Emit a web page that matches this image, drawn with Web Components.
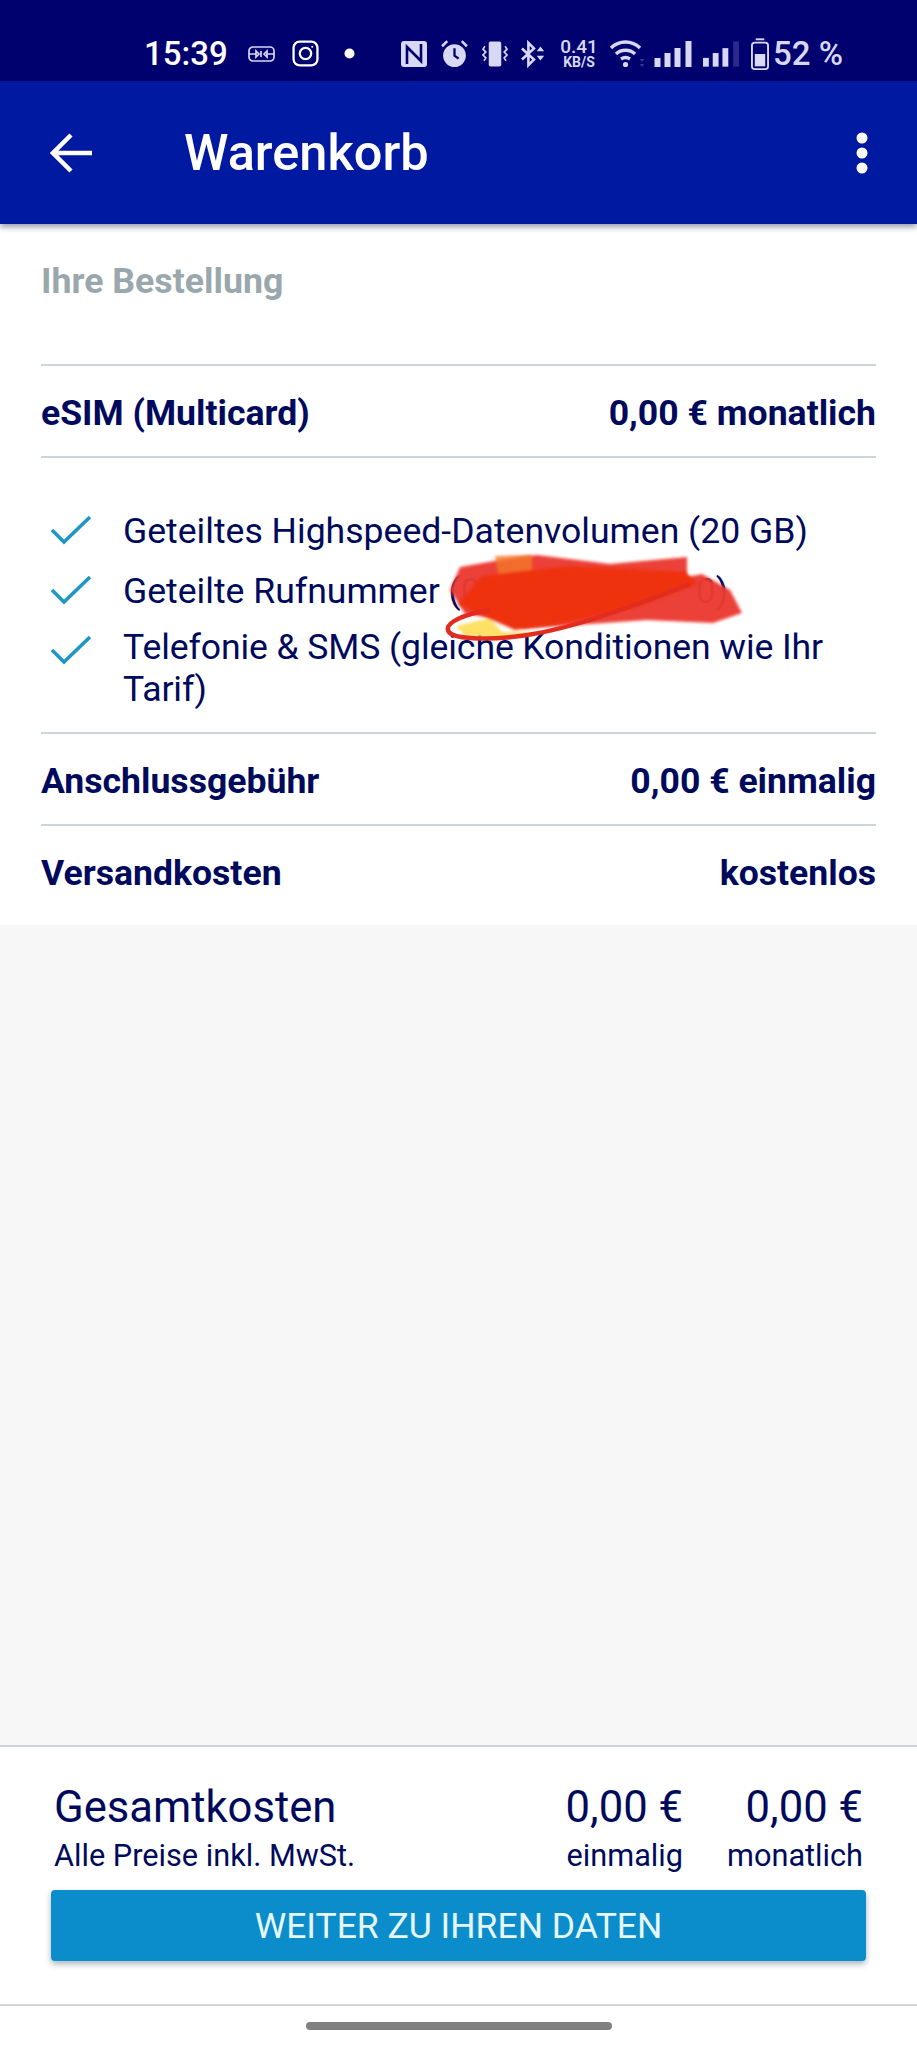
<!DOCTYPE html>
<html lang="de">
<head>
<meta charset="utf-8">
<title>Warenkorb</title>
<style>
  html, body { margin: 0; padding: 0; }
  body { width: 917px; height: 2048px; background: #fff; font-family: Roboto, "Liberation Sans", sans-serif; color: #000a5c; overflow: hidden; }
  .page { display: flex; flex-direction: column; height: 2048px; background: #f7f7f8; }
</style>
</head>
<body>
<div class="page">
  <status-bar></status-bar>
  <app-bar title="Warenkorb"></app-bar>
  <order-list></order-list>
  <total-panel></total-panel>
  <nav-handle></nav-handle>
</div>

<script>
class StatusBar extends HTMLElement {
  constructor() {
    super();
    this.attachShadow({ mode: 'open' });
    this.shadowRoot.innerHTML = `
      <style>
        :host { display: flex; align-items: center; height: 81px; background: #00006f; color: #fff; box-sizing: border-box; padding: 26px 0 0 144px; flex: none; }
        svg { display: block; flex: none; }
        .time { font-size: 33px; font-weight: 500; width: 84px; white-space: nowrap; }
        .speed { width: 40px; margin-left: 13px; text-align: center; color: #d8d8f4; line-height: 1; }
        .speed b { display: block; font-size: 19px; font-weight: 500; line-height: 18px; }
        .speed i { display: block; font-style: normal; font-weight: 700; font-size: 14px; line-height: 13px; }
        .pct { font-size: 33px; color: #d8d8f4; font-weight: 500; margin-left: 4px; white-space: nowrap; }
      </style>
      <span class="time">15:39</span>
      <svg style="margin-left:20px" width="27" height="16" viewBox="0 0 27 16" fill="none" stroke="#d8d8f4" stroke-width="1.7"><rect x="1" y="1" width="25" height="14" rx="4"/><path d="M1 8h7M19 8h7M8 5l3 3-3 3zM19 5l-3 3 3 3zM13 5v6"/></svg>
      <svg style="margin-left:17px" width="27" height="27" viewBox="0 0 26 26" fill="none" stroke="#fff" stroke-width="2.2"><rect x="1.500" y="1.500" width="23" height="23" rx="6"/><circle cx="13" cy="13" r="5.500"/><circle cx="19.500" cy="6.500" r="1" fill="#fff" stroke="none"/></svg>
      <svg style="margin-left:25px" width="11" height="11" viewBox="0 0 11 11"><circle cx="5.500" cy="5.500" r="5" fill="#fff"/></svg>
      <svg style="margin-left:46px" width="26" height="26" viewBox="0 0 26 26"><path fill="#d8d8f4" d="M3 0h20a3 3 0 0 1 3 3v20a3 3 0 0 1-3 3H3a3 3 0 0 1-3-3V3a3 3 0 0 1 3-3z"/><path fill="none" stroke="#00006f" stroke-width="2.600" d="M6 23V6l11 11M20 3v17L9 9"/></svg>
      <svg style="margin-left:13px" width="29" height="29" viewBox="0 0 28 28"><circle cx="14" cy="16" r="11" fill="#d8d8f4"/><path d="M14 9v7l4 3" fill="none" stroke="#00006f" stroke-width="2.200"/><path d="M2 7l5-5M26 7l-5-5" stroke="#d8d8f4" stroke-width="2.400" fill="none"/></svg>
      <svg style="margin-left:13px" width="26" height="26" viewBox="0 0 27 26"><rect x="7" y="0" width="13" height="26" rx="2" fill="#d8d8f4"/><path d="M3 5l-2 3 3 3-3 3 3 3-2 3M24 5l2 3-3 3 3 3-3 3 2 3" fill="none" stroke="#d8d8f4" stroke-width="1.700"/></svg>
      <svg style="margin-left:13px" width="25" height="28" viewBox="0 0 27 28" fill="none" stroke="#d8d8f4" stroke-width="2.800"><path d="M1 8l13 12-6 6V2l6 6L1 20"/><path fill="#d8d8f4" stroke="none" d="M17 11l4-5 4 5zM17 16l4 5 4-5z"/></svg>
      <span class="speed"><b>0.41</b><i>KB/S</i></span>
      <svg style="margin-left:10px" width="36" height="29" viewBox="0 0 36 29" fill="none" stroke="#d8d8f4" stroke-width="3.400"><path d="M2 9c8-8 21-8 29 0M7 15c5-5 14-5 19 0M12 20c3-2 6-2 9 0"/><circle cx="16.500" cy="25.500" r="2.600" fill="#d8d8f4" stroke="none"/><path d="M31 20l2 3 2-3zM31 25l2 3 2-3z" fill="#3a3a9e" stroke="none"/></svg>
      <svg style="margin-left:9px" width="38" height="26" viewBox="0 0 37 26" fill="#d8d8f4"><rect x="0" y="17" width="6" height="9"/><rect x="10" y="12" width="6" height="14"/><rect x="20" y="7" width="6" height="19"/><rect x="31" y="0" width="6" height="26"/></svg>
      <svg style="margin-left:11px" width="36" height="26" viewBox="0 0 37 26" fill="#d8d8f4"><rect x="0" y="17" width="6" height="9"/><rect x="10" y="12" width="6" height="14"/><rect x="20" y="7" width="6" height="19"/><rect x="31" y="0" width="6" height="26" fill="#2a2a8a"/></svg>
      <svg style="margin-left:12px" width="18" height="34" viewBox="0 0 19 34" fill="none" stroke="#d8d8f4" stroke-width="2"><rect x="1" y="5" width="17" height="28" rx="3"/><path d="M5 1.500h9"/><rect x="4" y="17" width="11" height="13" fill="#d8d8f4" stroke="none"/></svg>
      <span class="pct">52 %</span>
    `;
  }
}

class AppBar extends HTMLElement {
  constructor() {
    super();
    this.attachShadow({ mode: 'open' });
    this.shadowRoot.innerHTML = `
      <style>
        :host { display: flex; align-items: center; height: 143px; background: #0019a1; color: #fff; flex: none; position: relative; box-shadow: 0 3px 6px rgba(0,0,40,.4); z-index: 2; box-sizing: border-box; padding: 0 0 0 50px; }
        h1 { margin: 0 0 0 91px; font-size: 50.500px; font-weight: 500; flex: 1; }
        svg { display: block; }
        .more { margin-right: 48px; }
      </style>
      <svg width="43" height="40" viewBox="0 0 43 40" fill="none" stroke="#fff" stroke-width="4.500"><path d="M42 20H3M21 2L3 20l18 18"/></svg>
      <h1></h1>
      <svg class="more" width="14" height="42" viewBox="0 0 14 42" fill="#fff"><circle cx="7" cy="6" r="5.500"/><circle cx="7" cy="21" r="5.500"/><circle cx="7" cy="36" r="5.500"/></svg>
    `;
    this.shadowRoot.querySelector('h1').textContent = this.getAttribute('title');
  }
}

class PriceRow extends HTMLElement {
  constructor() {
    super();
    this.attachShadow({ mode: 'open' });
    this.shadowRoot.innerHTML = `
      <style>
        :host { display: flex; justify-content: space-between; align-items: center; height: 90px; box-sizing: content-box; font-size: 35.600px; font-weight: 700; color: #000a5c; }
        div { display: flex; justify-content: space-between; width: 100%; padding-top: 3px; }
      </style>
      <div><slot name="label"></slot><slot name="value"></slot></div>
    `;
  }
}

class CheckItem extends HTMLElement {
  constructor() {
    super();
    this.attachShadow({ mode: 'open' });
    this.shadowRoot.innerHTML = `
      <style>
        :host { display: flex; align-items: flex-start; font-size: 35.600px; line-height: 42px; color: #000a5c; }
        svg { flex: none; display: block; margin: var(--icon-top, 5px) 31px 0 9px; }
      </style>
      <svg width="42" height="30" viewBox="0 0 42 30" fill="none" stroke="#1f96c4" stroke-width="3.600"><path d="M2 15l12 12L40 2"/></svg>
      <div><slot></slot></div>
    `;
  }
}

class OrderList extends HTMLElement {
  constructor() {
    super();
    this.attachShadow({ mode: 'open' });
    this.shadowRoot.innerHTML = `
      <style>
        :host { display: block; background: #fff; padding: 0 41px; height: 701px; box-sizing: border-box; flex: none; position: relative; }
        h2 { margin: 0; height: 142px; box-sizing: border-box; padding-top: 37px; font-size: 35.700px; line-height: 40px; font-weight: 700; color: #9aa7ad; border-bottom: 2px solid #ccd6d8; }
        .line { border-top: 2px solid #ccd6d8; }
        .checks { display: flex; flex-direction: column; padding: 52px 0 22px; border-bottom: 2px solid #ccd6d8; border-top: 2px solid #ccd6d8; }
        .checks check-item + check-item { margin-top: 18px; }
        .checks check-item:last-child { margin-top: 14px; --icon-top: 9px; letter-spacing: -.1px; }
        .gap { display: inline-block; width: 215px; }
        .scribble { position: absolute; left: 440px; top: 320px; }
      </style>
      <h2>Ihre Bestellung</h2>
      <price-row><span slot="label">eSIM (Multicard)</span><span slot="value">0,00 € monatlich</span></price-row>
      <div class="checks">
        <check-item>Geteiltes Highspeed-Datenvolumen (20 GB)</check-item>
        <check-item>Geteilte Rufnummer (0<span class="gap"></span>0)</check-item>
        <check-item>Telefonie &amp; SMS (gleiche Konditionen wie Ihr Tarif)</check-item>
      </div>
      <price-row><span slot="label">Anschlussgebühr</span><span slot="value">0,00 € einmalig</span></price-row>
      <price-row class="line"><span slot="label">Versandkosten</span><span slot="value">kostenlos</span></price-row>
      <svg class="scribble" width="310" height="100" viewBox="0 0 310 100">
        <defs><filter id="b"><feGaussianBlur stdDeviation="1.500"/></filter></defs>
        <path filter="url(#b)" opacity=".97" d="M20 23L60 16 97 11 170 20 247 13V33L262 30 290 46 302 69 273 79 207 76 150 80 85 84 55 74 25 70 10 46z" fill="#ec3a33"/>
        <path filter="url(#b)" opacity=".8" d="M55 12L92 11V34L60 38z" fill="#f4792c"/>
        <path filter="url(#b)" d="M16 82L50 74 62 88 105 88 60 94 25 92z" fill="#ffe066"/>
        <path filter="url(#b)" d="M42 32L130 22 245 28 258 40 200 62 120 80 75 86 48 74 18 60z" fill="#ee3010"/>
        <path d="M50 66C25 70 6 78 8 86 10 96 50 96 80 92 130 86 200 60 250 40" fill="none" stroke="#e32c20" stroke-width="4.500"/>
      </svg>
    `;
  }
}

class TotalPanel extends HTMLElement {
  constructor() {
    super();
    this.attachShadow({ mode: 'open' });
    this.shadowRoot.innerHTML = `
      <style>
        :host { display: block; flex: none; margin-top: auto; height: 261px; box-sizing: border-box; background: #fff; border-top: 2px solid #cdd3d5; border-bottom: 2px solid #d4d6d8; padding: 35px 51px 0; color: #000a5c; position: relative; }
        .sum { display: flex; padding: 0 3px; height: 108px; }
        .sum > div { display: flex; flex-direction: column; }
        .left { flex: 1; }
        .col { text-align: right; width: 118px; margin-left: 41px; white-space: nowrap; }
        .col + .col { width: 136px; margin-left: 44px; }
        .big { font-size: 43.600px; line-height: 52px; }
        .small { font-size: 30.700px; line-height: 40px; margin-top: 2px; }
        button { display: block; width: 815px; height: 71px; margin: 0; border: 0; border-radius: 4px; background: #0b8dcb; color: #e6f7fb; font: 400 35.500px Roboto, sans-serif; box-shadow: 0 3px 6px rgba(0,40,60,.35); }
      </style>
      <div class="sum">
        <div class="left"><span class="big">Gesamtkosten</span><span class="small">Alle Preise inkl. MwSt.</span></div>
        <div class="col"><span class="big">0,00 €</span><span class="small">einmalig</span></div>
        <div class="col"><span class="big">0,00 €</span><span class="small">monatlich</span></div>
      </div>
      <button>WEITER ZU IHREN DATEN</button>
    `;
  }
}

class NavHandle extends HTMLElement {
  constructor() {
    super();
    this.attachShadow({ mode: 'open' });
    this.shadowRoot.innerHTML = `
      <style>
        :host { display: flex; justify-content: center; align-items: center; height: 42px; background: #fff; flex: none; }
        div { width: 306px; height: 8px; border-radius: 4px; background: #808080; margin-bottom: 2px; }
      </style>
      <div></div>
    `;
  }
}

customElements.define('status-bar', StatusBar);
customElements.define('app-bar', AppBar);
customElements.define('price-row', PriceRow);
customElements.define('check-item', CheckItem);
customElements.define('order-list', OrderList);
customElements.define('total-panel', TotalPanel);
customElements.define('nav-handle', NavHandle);
</script>
</body>
</html>
